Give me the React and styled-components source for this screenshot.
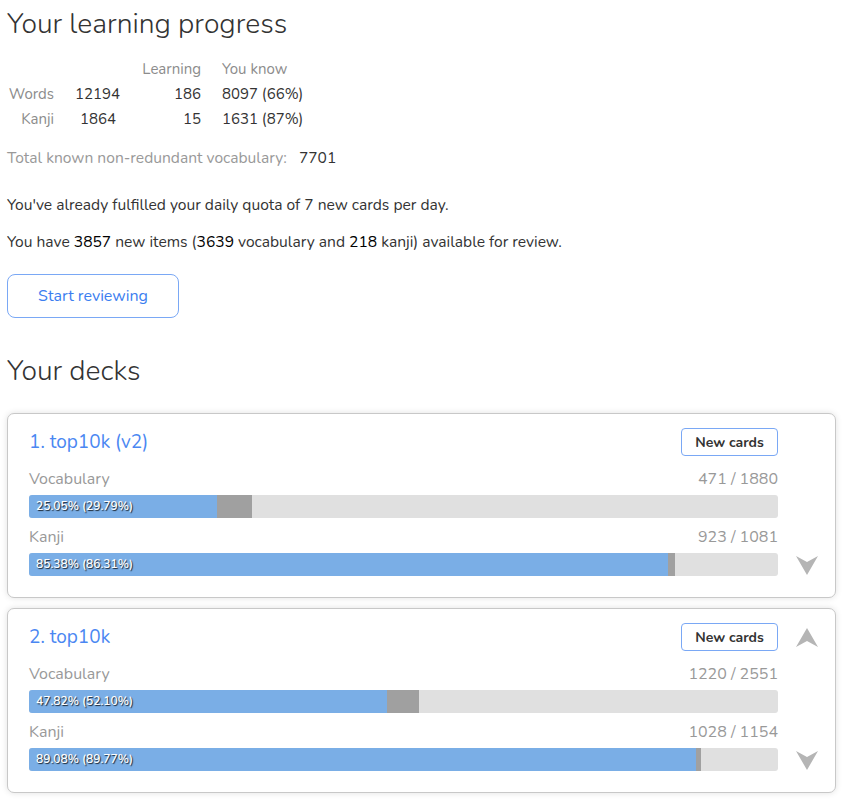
import React from "react";
import styled, { createGlobalStyle } from "styled-components";

const Global = createGlobalStyle`
  html, body { margin: 0; padding: 0; background: #fff; }
  body { font-family: "Nunito", "Lato", "Noto Sans", sans-serif; color: #333; }
`;

const Page = styled.div`
  padding: 0 9px 10px 7px;
`;

const Heading = styled.h1`
  font-size: 28.3px;
  font-weight: 300;
  color: #333;
  margin: ${(p) => p.$top || 0}px 0 0 0;
  line-height: 34px;
`;

const StatsGrid = styled.div`
  display: grid;
  grid-template-columns: 47px 41px 64px auto;
  column-gap: 21px;
  margin-top: 16px;
  font-size: 15px;
  line-height: 25px;
`;

const Cell = styled.div`
  text-align: ${(p) => (p.$right ? "right" : "left")};
  color: ${(p) => (p.$muted ? "#8c8c8c" : "#333")};
  white-space: nowrap;
`;

const TotalLine = styled.div`
  margin-top: 15px;
  font-size: 15.6px;
  color: #999;
  line-height: 22px;
  span { color: #333; margin-left: 12px; }
`;

const Para = styled.p`
  margin: ${(p) => p.$top}px 0 0 0;
  font-size: 15.6px;
  line-height: 22px;
  color: #333;
  b { font-weight: 400; color: #000; }
`;

const ReviewButton = styled.button`
  margin-top: 21px;
  width: 172px;
  height: 44px;
  border: 1px solid #7aa8f5;
  border-radius: 8px;
  background: #fff;
  color: #3b7ef0;
  font-family: inherit;
  font-size: 16px;
  cursor: pointer;
`;

const Decks = styled.div`
  display: flex;
  flex-direction: column;
  gap: 10px;
  margin-top: 25px;
`;

const Card = styled.div`
  display: grid;
  grid-template-columns: 1fr 57px;
  border: 1px solid #c8c8c8;
  border-radius: 7px;
  box-shadow: 0 0 6px rgba(0, 0, 0, 0.12);
  background: #fff;
  padding: 14px 0 21px 21px;
`;

const Main = styled.div`
  display: flex;
  flex-direction: column;
`;

const TitleRow = styled.div`
  display: flex;
  align-items: center;
  justify-content: space-between;
  height: 28px;
`;

const Title = styled.a`
  color: #4a87f2;
  font-size: 19px;
  text-decoration: none;
`;

const NewCards = styled.button`
  height: 28px;
  width: 97px;
  padding: 0;
  border: 1px solid #7aa8f5;
  border-radius: 4px;
  background: #fff;
  font-family: inherit;
  font-weight: 700;
  font-size: 14px;
  color: #333;
`;

const LabelRow = styled.div`
  display: flex;
  justify-content: space-between;
  font-size: 16px;
  color: #999;
  margin-top: ${(p) => p.$top}px;
  line-height: 22px;
`;

const Track = styled.div`
  position: relative;
  height: 23px;
  margin-top: ${(p) => p.$top}px;
  border-radius: 3px;
  background: #e0e0e0;
  overflow: hidden;
  display: flex;
`;

const Fill = styled.div`
  height: 100%;
  background: ${(p) => p.$color};
  flex: none;
`;

const BarText = styled.span`
  position: absolute;
  left: 7px;
  top: 0;
  line-height: 23px;
  font-size: 12px;
  font-weight: 600;
  color: #fff;
  text-shadow: 1px 1px 1px rgba(0,0,0,0.8);
`;

const Side = styled.div`
  display: flex;
  flex-direction: column;
  justify-content: space-between;
  align-items: center;
  padding: 4px 0 0;
`;

const Arrow = styled.svg`
  width: 24px;
  height: 22px;
  visibility: ${(p) => (p.$hidden ? "hidden" : "visible")};
`;

const ArrowUp = ({ hidden }) => (
  <Arrow viewBox="0 0 24 22" $hidden={hidden}>
    <path d="M12 1 L23 20 L12 14 L1 20 Z" fill="#b5b5b5" />
  </Arrow>
);
const ArrowDown = ({ hidden }) => (
  <Arrow viewBox="0 0 24 22" $hidden={hidden}>
    <path d="M1 2 L12 8 L23 2 L12 21 Z" fill="#b5b5b5" />
  </Arrow>
);

const Bar = ({ known, learning, text, top }) => (
  <Track $top={top}>
    <Fill $color="#7aaee6" style={{ width: `${known}%` }} />
    <Fill $color="#a0a0a0" style={{ width: `${learning - known}%` }} />
    <BarText>{text}</BarText>
  </Track>
);

const decks = [
  {
    name: "1. top10k (v2)",
    vocab: { count: "471 / 1880", k: 25.05, l: 29.79 },
    kanji: { count: "923 / 1081", k: 85.38, l: 86.31 },
    up: false,
    down: true,
  },
  {
    name: "2. top10k",
    vocab: { count: "1220 / 2551", k: 47.82, l: 52.1 },
    kanji: { count: "1028 / 1154", k: 89.08, l: 89.77 },
    up: true,
    down: true,
  },
];

const fmt = (v) => v.toFixed(2) + "%";

export default function App() {
  return (
    <Page>
      <Global />
      <Heading $top={7}>Your learning progress</Heading>
      <StatsGrid>
        <Cell />
        <Cell />
        <Cell $right $muted>Learning</Cell>
        <Cell $muted>You know</Cell>
        <Cell $right $muted>Words</Cell>
        <Cell $right>12194</Cell>
        <Cell $right>186</Cell>
        <Cell>8097 (66%)</Cell>
        <Cell $right $muted>Kanji</Cell>
        <Cell $right>1864</Cell>
        <Cell $right>15</Cell>
        <Cell>1631 (87%)</Cell>
      </StatsGrid>
      <TotalLine>
        Total known non-redundant vocabulary:<span>7701</span>
      </TotalLine>
      <Para $top={25}>You've already fulfilled your daily quota of 7 new cards per day.</Para>
      <Para $top={15}>
        You have <b>3857</b> new items (<b>3639</b> vocabulary and <b>218</b> kanji) available for review.
      </Para>
      <ReviewButton>Start reviewing</ReviewButton>
      <Heading $top={36}>Your decks</Heading>
      <Decks>
        {decks.map((d) => (
          <Card key={d.name}>
            <Main>
              <TitleRow>
                <Title href="#">{d.name}</Title>
                <NewCards>New cards</NewCards>
              </TitleRow>
              <LabelRow $top={12}>
                <span>Vocabulary</span>
                <span>{d.vocab.count}</span>
              </LabelRow>
              <Bar top={5} known={d.vocab.k} learning={d.vocab.l} text={`${fmt(d.vocab.k)} (${fmt(d.vocab.l)})`} />
              <LabelRow $top={8}>
                <span>Kanji</span>
                <span>{d.kanji.count}</span>
              </LabelRow>
              <Bar top={5} known={d.kanji.k} learning={d.kanji.l} text={`${fmt(d.kanji.k)} (${fmt(d.kanji.l)})`} />
            </Main>
            <Side>
              <ArrowUp hidden={!d.up} />
              <ArrowDown hidden={!d.down} />
            </Side>
          </Card>
        ))}
      </Decks>
    </Page>
  );
}
